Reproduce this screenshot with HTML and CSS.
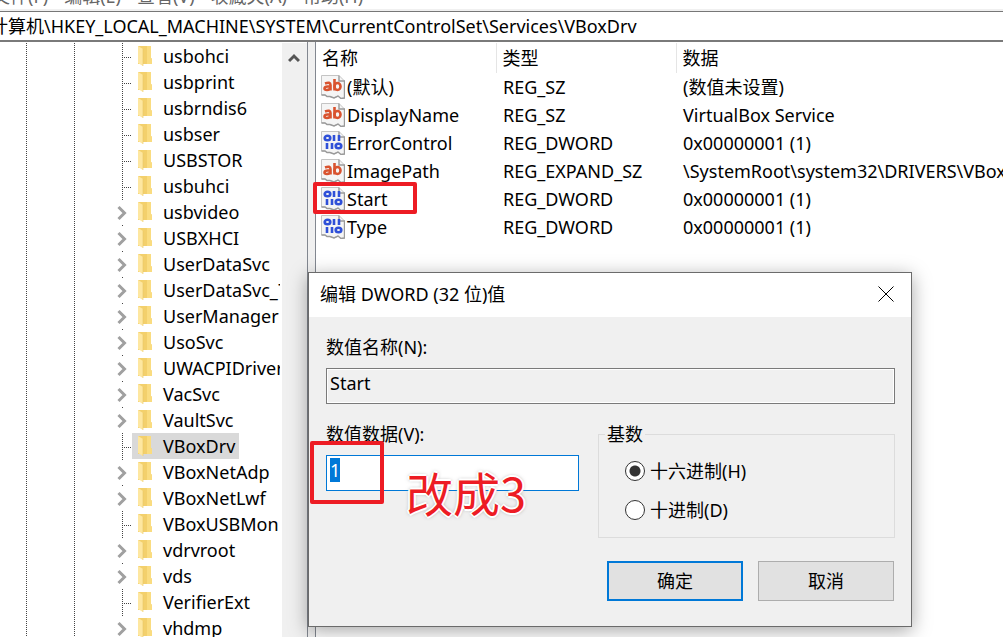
FILE: index.html
```html
<!DOCTYPE html>
<html lang="zh-CN">

<head>
    <meta charset="utf-8">
    <meta name="viewport" content="width=device-width,initial-scale=1.0">
    <title>注册表编辑器</title>
    <link rel="stylesheet" href="styles.css">
</head>

<body>
<svg class="sprite" aria-hidden="true">
    <symbol id="leaf" viewBox="0 0 16 26">
        <path d="M6.5 0V26M8 14.5H16" fill="none" stroke="#444" stroke-dasharray="1 1"/>
    </symbol>
    <symbol id="closed" viewBox="0 0 16 26">
        <path d="M6 0h1v1H6z" fill="#444"/>
        <path d="M2.500 8L8.500 14L2.500 20" fill="none" stroke="#a0a0a0" stroke-width="3"/>
    </symbol>
    <symbol id="folder" viewBox="0 0 14 22">
        <path d="M0 1H13V13L14 14V19H0z" fill="#f3d06c"/>
        <path d="M9 1H13V13L14 14V19H9z" fill="#fadc80"/>
        <path d="M0 1L5 4V21L0 18z" fill="#fee7a0"/>
        <path d="M5 4V21" stroke="#eac767" stroke-width="0.6"/>
    </symbol>
    <symbol id="page" viewBox="0 0 24 24">
        <path d="M.5 .5H18L23.500 6V23L20 23.500L17 21L13 23L9 21.500L6 21.500L4 20L.5 20z" fill="#f5f5f5" stroke="#c4c4c4"/>
        <path d="M18 .5V6H23.500V23L20 23.500L17 21L13 23L9 21.500L6 21.500L4 20L.5 20" fill="none" stroke="#9a9a9a" stroke-width="1.4"/>
    </symbol>
    <symbol id="string" viewBox="0 0 24 24">
        <use href="#page"/>
        <g fill="none" stroke="#d9532f" stroke-width="2.600">
            <path d="M4 8.500Q9.500 6.500 9.500 10V15.500M9.500 11.500H6.500Q3.500 11.500 3.500 13.500Q3.500 15 6 15Q9 15 9.500 12.500"/>
            <path d="M13.500 4V15.500"/>
            <ellipse cx="16.500" cy="11.500" rx="3" ry="3.500"/>
        </g>
    </symbol>
    <symbol id="binary" viewBox="0 0 24 24">
        <use href="#page"/>
        <g fill="none" stroke="#2f50d8" stroke-width="2.600">
            <ellipse cx="6.500" cy="7" rx="2.800" ry="2.200"/>
            <path d="M13 4V10M18 4V10M6 12V18M11 12V18"/>
            <ellipse cx="17.500" cy="15" rx="2.800" ry="2.200"/>
        </g>
    </symbol>
</svg>

<nav class="menu">
    <a href="#">文件(F)</a>
    <a href="#">编辑(E)</a>
    <a href="#">查看(V)</a>
    <a href="#">收藏夹(A)</a>
    <a href="#">帮助(H)</a>
</nav>
<div class="address"><span class="address-path">计算机\HKEY_LOCAL_MACHINE\SYSTEM\CurrentControlSet\Services\VBoxDrv</span></div>

<main class="panes">
    <div class="tree-pane">
        <ul class="tree">
            <li><svg class="branch"><use href="#leaf"/></svg><span class="key"><svg class="folder"><use href="#folder"/></svg>usbohci</span></li>
            <li><svg class="branch"><use href="#leaf"/></svg><span class="key"><svg class="folder"><use href="#folder"/></svg>usbprint</span></li>
            <li><svg class="branch"><use href="#leaf"/></svg><span class="key"><svg class="folder"><use href="#folder"/></svg>usbrndis6</span></li>
            <li><svg class="branch"><use href="#leaf"/></svg><span class="key"><svg class="folder"><use href="#folder"/></svg>usbser</span></li>
            <li><svg class="branch"><use href="#leaf"/></svg><span class="key"><svg class="folder"><use href="#folder"/></svg>USBSTOR</span></li>
            <li><svg class="branch"><use href="#leaf"/></svg><span class="key"><svg class="folder"><use href="#folder"/></svg>usbuhci</span></li>
            <li><svg class="branch"><use href="#closed"/></svg><span class="key"><svg class="folder"><use href="#folder"/></svg>usbvideo</span></li>
            <li><svg class="branch"><use href="#closed"/></svg><span class="key"><svg class="folder"><use href="#folder"/></svg>USBXHCI</span></li>
            <li><svg class="branch"><use href="#closed"/></svg><span class="key"><svg class="folder"><use href="#folder"/></svg>UserDataSvc</span></li>
            <li><svg class="branch"><use href="#closed"/></svg><span class="key"><svg class="folder"><use href="#folder"/></svg>UserDataSvc_7</span></li>
            <li><svg class="branch"><use href="#closed"/></svg><span class="key"><svg class="folder"><use href="#folder"/></svg>UserManager</span></li>
            <li><svg class="branch"><use href="#closed"/></svg><span class="key"><svg class="folder"><use href="#folder"/></svg>UsoSvc</span></li>
            <li><svg class="branch"><use href="#closed"/></svg><span class="key"><svg class="folder"><use href="#folder"/></svg>UWACPIDriver</span></li>
            <li><svg class="branch"><use href="#closed"/></svg><span class="key"><svg class="folder"><use href="#folder"/></svg>VacSvc</span></li>
            <li><svg class="branch"><use href="#closed"/></svg><span class="key"><svg class="folder"><use href="#folder"/></svg>VaultSvc</span></li>
            <li><svg class="branch"><use href="#leaf"/></svg><span class="key selected"><svg class="folder"><use href="#folder"/></svg>VBoxDrv</span></li>
            <li><svg class="branch"><use href="#closed"/></svg><span class="key"><svg class="folder"><use href="#folder"/></svg>VBoxNetAdp</span></li>
            <li><svg class="branch"><use href="#closed"/></svg><span class="key"><svg class="folder"><use href="#folder"/></svg>VBoxNetLwf</span></li>
            <li><svg class="branch"><use href="#leaf"/></svg><span class="key"><svg class="folder"><use href="#folder"/></svg>VBoxUSBMon</span></li>
            <li><svg class="branch"><use href="#closed"/></svg><span class="key"><svg class="folder"><use href="#folder"/></svg>vdrvroot</span></li>
            <li><svg class="branch"><use href="#closed"/></svg><span class="key"><svg class="folder"><use href="#folder"/></svg>vds</span></li>
            <li><svg class="branch"><use href="#leaf"/></svg><span class="key"><svg class="folder"><use href="#folder"/></svg>VerifierExt</span></li>
            <li><svg class="branch"><use href="#closed"/></svg><span class="key"><svg class="folder"><use href="#folder"/></svg>vhdmp</span></li>
        </ul>
        <div class="scrollbar">
            <button type="button" class="scroll-up" aria-label="向上滚动">
                <svg width="12" height="10" viewBox="0 0 12 10"><path d="M1 8L6 3L11 8" fill="none" stroke="#555" stroke-width="3"/></svg>
            </button>
        </div>
    </div>
    <div class="splitter"></div>
    <div class="list-pane">
        <table class="values">
            <thead>
            <tr><th class="col-name">名称</th><th class="col-type">类型</th><th>数据</th></tr>
            </thead>
            <tbody>
            <tr><td><span class="name"><svg class="icon"><use href="#string"/></svg>(默认)</span></td><td>REG_SZ</td><td>(数值未设置)</td></tr>
            <tr><td><span class="name"><svg class="icon"><use href="#string"/></svg>DisplayName</span></td><td>REG_SZ</td><td>VirtualBox Service</td></tr>
            <tr><td><span class="name"><svg class="icon"><use href="#binary"/></svg>ErrorControl</span></td><td>REG_DWORD</td><td>0x00000001 (1)</td></tr>
            <tr><td><span class="name"><svg class="icon"><use href="#string"/></svg>ImagePath</span></td><td>REG_EXPAND_SZ</td><td>\SystemRoot\system32\DRIVERS\VBoxDrv.sys</td></tr>
            <tr><td><span class="name"><svg class="icon"><use href="#binary"/></svg>Start</span></td><td>REG_DWORD</td><td>0x00000001 (1)</td></tr>
            <tr><td><span class="name"><svg class="icon"><use href="#binary"/></svg>Type</span></td><td>REG_DWORD</td><td>0x00000001 (1)</td></tr>
            </tbody>
        </table>
    </div>
</main>

<form class="dialog" role="dialog" aria-labelledby="dialog-title">
    <header class="dialog-head">
        <span id="dialog-title">编辑 DWORD (32 位)值</span>
        <button type="button" class="close" aria-label="关闭">
            <svg width="16" height="16" viewBox="0 0 16 16"><path d="M.5 .5L15.500 15.500M15.500 .5L.5 15.500" stroke="#000"/></svg>
        </button>
    </header>
    <div class="dialog-body">
        <label for="value-name">数值名称(N):</label>
        <input type="text" class="field" id="value-name" value="Start" readonly>
        <div class="columns">
            <div class="data">
                <label for="value-data">数值数据(V):</label>
                <input type="text" class="field field-active" id="value-data" value="1">
            </div>
            <fieldset class="base">
                <legend>基数</legend>
                <label class="option"><input type="radio" name="base" checked>十六进制(H)</label>
                <label class="option"><input type="radio" name="base">十进制(D)</label>
            </fieldset>
        </div>
        <div class="actions">
            <button type="submit" class="btn btn-default">确定</button>
            <button type="button" class="btn">取消</button>
        </div>
    </div>
</form>

<div class="mark mark-row"></div>
<div class="mark mark-value"></div>
<div class="note">改成3</div>

<script>
    document.getElementById('value-data').select();
</script>
</body>
</html>
```
FILE: styles.css
```css
* {
    box-sizing: border-box;
    margin: 0;
    padding: 0;
}

body {
    position: relative;
    display: flex;
    flex-direction: column;
    height: 100vh;
    overflow: hidden;
    background-color: #fff;
    color: #000;
    font-family: "Noto Sans", "Noto Sans CJK SC", sans-serif;
    font-size: 18px;
    line-height: 26px;
}

input,
button {
    font: inherit;
    color: inherit;
}

.sprite {
    position: absolute;
    width: 0;
    height: 0;
}

.menu {
    display: flex;
    flex: none;
    align-items: flex-end;
    gap: 16px;
    height: 9px;
    margin-left: -8px;
    overflow: hidden;
    white-space: nowrap;
}

.menu a {
    color: #666;
    text-decoration: none;
}

.address {
    flex: none;
    height: 33px;
    border-top: 2px solid #f0f0f0;
    border-bottom: 2px solid #7a7a7a;
    overflow: hidden;
    white-space: nowrap;
}

.address-path {
    display: block;
    height: 29px;
    margin-left: -10px;
    border-top: 1px solid #777;
    line-height: 29px;
}

.panes {
    display: flex;
    flex: 1;
    min-height: 0;
}

/* key tree */
.tree-pane {
    display: flex;
    flex: none;
    width: 307px;
    padding-top: 1px;
}

.tree {
    flex: 1;
    min-width: 0;
    border-right: 2px solid #fff;
    overflow: hidden;
    list-style: none;
    white-space: nowrap;
}

.tree li {
    display: flex;
    height: 26px;
    padding-left: 116px;
    background-image: repeating-linear-gradient(#444 0 1px, transparent 1px 2px), repeating-linear-gradient(#444 0 1px, transparent 1px 2px);
    background-position: 26px 0, 74px 0;
    background-size: 1px 26px;
    background-repeat: no-repeat;
}

.branch {
    flex: none;
    width: 16px;
    height: 26px;
}

.key {
    display: flex;
    flex: none;
    align-items: center;
    gap: 11px;
    padding: 0 4px 0 6px;
}

.key.selected {
    background-color: #d9d9d9;
}

.folder {
    width: 14px;
    height: 22px;
}

.scrollbar {
    flex: none;
    width: 25px;
    background-color: #f0f0f0;
}

.scroll-up {
    display: block;
    width: 24px;
    height: 26px;
    border: none;
    background: none;
}

.splitter {
    flex: none;
    width: 9px;
    border: 1px solid #828790;
    border-width: 0 1px;
    background-color: #f0f0f0;
}

/* value list */
.list-pane {
    flex: 1;
    min-width: 0;
    padding-top: 1px;
    overflow: hidden;
}

.values {
    width: 100%;
    border-collapse: collapse;
    table-layout: fixed;
    white-space: nowrap;
}

.values th {
    height: 30px;
    padding-left: 6px;
    border-right: 1px solid #e5e5e5;
    font-weight: normal;
    text-align: left;
}

.values th:last-child {
    border-right: none;
}

.values td {
    height: 28px;
    padding-left: 7px;
}

.values td:first-child {
    padding-left: 5px;
}

.col-name,
.col-type {
    width: 180px;
}

.name {
    display: flex;
    align-items: center;
    gap: 2px;
}

.icon {
    width: 24px;
    height: 24px;
}

/* edit dialog */
.dialog {
    position: absolute;
    top: 272px;
    left: 308px;
    width: 604px;
    border: 1px solid #6b6b6b;
    background-color: #f0f0f0;
    box-shadow: 0 4px 18px rgba(0, 0, 0, 0.35);
}

.dialog-head {
    display: flex;
    align-items: center;
    justify-content: space-between;
    height: 44px;
    padding: 0 17px 2px 11px;
    background-color: #fff;
}

.close {
    display: flex;
    border: none;
    background: none;
}

.dialog-body {
    padding: 17px 16px 25px 17px;
}

.dialog-body label {
    display: block;
}

.field {
    display: block;
    width: 100%;
    height: 36px;
    margin-top: 8px;
    padding: 0 4px 6px 3px;
    border: 1px solid #7a7a7a;
    outline: none;
    background-color: #fff;
}

.field:read-only {
    background-color: #f0f0f0;
    box-shadow: inset 0 0 0 1px #fff;
}

.field-active {
    border-color: #0078d7;
}

.field::selection {
    background-color: #0078d7;
    color: #fff;
}

.columns {
    display: flex;
    gap: 19px;
    margin-top: 17px;
}

.data {
    flex: 1;
}

.base {
    width: 297px;
    height: 117px;
    padding: 0 8px;
    border: 1px solid #dcdcdc;
}

.base legend {
    padding: 0 2px;
    margin-left: -2px;
}

.base .option {
    display: flex;
    align-items: center;
    gap: 5px;
    margin: 11px 0 13px 18px;
}

.option input {
    width: 20px;
    height: 20px;
    border: 1px solid #333;
    border-radius: 50%;
    background-color: #fff;
    appearance: none;
}

.option input:checked {
    background-image: radial-gradient(circle, #333 5px, transparent 6px);
}

.actions {
    display: flex;
    justify-content: flex-end;
    gap: 15px;
    margin-top: 23px;
    padding-right: 1px;
}

.btn {
    width: 136px;
    height: 40px;
    border: 1px solid #adadad;
    background-color: #e1e1e1;
}

.btn-default {
    border: 2px solid #0078d7;
}

/* red pen marks drawn over the windows */
.mark {
    position: absolute;
    border: 4px solid #ed1c24;
    border-radius: 2px;
}

.mark-row {
    top: 182px;
    left: 313px;
    width: 104px;
    height: 32px;
}

.mark-value {
    top: 441px;
    left: 310px;
    width: 74px;
    height: 63px;
}

.note {
    position: absolute;
    top: 462px;
    left: 406px;
    color: #ed1c24;
    font-family: "Noto Sans CJK SC", sans-serif;
    font-size: 47px;
    line-height: 60px;
    text-shadow: -2px 0 #fff, 2px 0 #fff, 0 -2px #fff, 0 2px #fff, 0 0 4px #777;
}
```
